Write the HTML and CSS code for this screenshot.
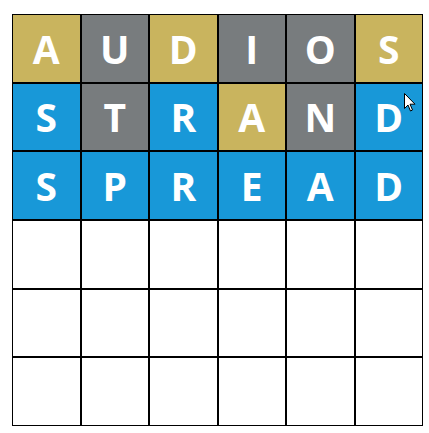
FILE: index.html
```html
<!DOCTYPE html>
<html lang="en">
<head>
    <meta charset="UTF-8">
    <meta name="viewport" content="width=device-width, initial-scale=1.0">
    <title>Wordle</title>
    <link rel="stylesheet" href="styles.css">
</head>
<body>
    <div class="board">
        <div class="tile present">A</div>
        <div class="tile absent">U</div>
        <div class="tile present">D</div>
        <div class="tile absent">I</div>
        <div class="tile absent">O</div>
        <div class="tile present">S</div>

        <div class="tile correct">S</div>
        <div class="tile absent">T</div>
        <div class="tile correct">R</div>
        <div class="tile present">A</div>
        <div class="tile absent">N</div>
        <div class="tile correct">D</div>

        <div class="tile correct">S</div>
        <div class="tile correct">P</div>
        <div class="tile correct">R</div>
        <div class="tile correct">E</div>
        <div class="tile correct">A</div>
        <div class="tile correct">D</div>

        <div class="tile"></div><div class="tile"></div><div class="tile"></div>
        <div class="tile"></div><div class="tile"></div><div class="tile"></div>
        <div class="tile"></div><div class="tile"></div><div class="tile"></div>
        <div class="tile"></div><div class="tile"></div><div class="tile"></div>
        <div class="tile"></div><div class="tile"></div><div class="tile"></div>
        <div class="tile"></div><div class="tile"></div><div class="tile"></div>

        <!-- pointeur de la souris -->
        <svg class="cursor" width="12" height="19" viewBox="0 0 12 19">
            <path d="M0.5 0.5 L0.5 15.5 L4 12 L6.5 18 L8.5 17 L6 11.2 L11 11.2 Z" fill="#fff" stroke="#000" stroke-width="1" stroke-linejoin="round"/>
        </svg>
    </div>
</body>
</html>
```

FILE: styles.css
```css
/* Styles généraux */
body {
    margin: 0;
    padding: 14px 0 0 12px;
    background: #fff;
    font-family: 'Open Sans', 'DejaVu Sans', sans-serif;
}

.board {
    position: relative;
    width: 411px;
    height: 412px;
    display: grid;
    grid-template-columns: repeat(6, 1fr);
    grid-template-rows: repeat(6, 1fr);
}

.tile {
    border: 1px solid #000;
    display: flex;
    justify-content: center;
    align-items: center;
    color: #fff;
    font-size: 39px;
    font-weight: bold;
    background-color: #fff;
}

.present {
    background-color: #c9b45e;
}

.absent {
    background-color: #787c7e;
}

.correct {
    background-color: #1898d8;
}

.cursor {
    position: absolute;
    left: 392px;
    top: 79px;
}
```
